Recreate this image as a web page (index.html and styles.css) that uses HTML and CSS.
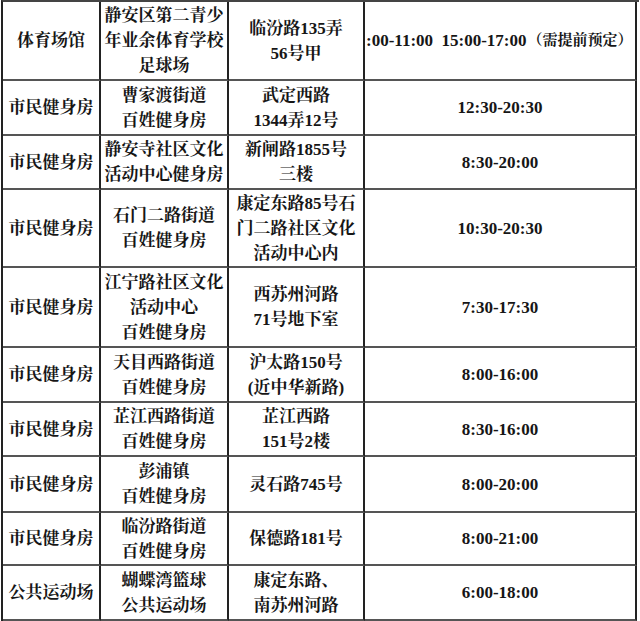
FILE: index.html
```html
<!DOCTYPE html>
<html lang="zh">
<head>
<meta charset="utf-8">
<title>场馆开放时间</title>
<link rel="stylesheet" href="styles.css">
</head>
<body>
<div class="sheet">
  <div class="row r1">
    <div class="cell">体育场馆</div>
    <div class="cell">静安区第二青少<br>年业余体育学校<br>足球场</div>
    <div class="cell">临汾路135弄<br>56号甲</div>
    <div class="cell wide"><span>:00-11:00&nbsp;&nbsp;15:00-17:00</span><span class="note">（需提前预定）</span></div>
  </div>
  <div class="row r2">
    <div class="cell">市民健身房</div>
    <div class="cell">曹家渡街道<br>百姓健身房</div>
    <div class="cell">武定西路<br>1344弄12号</div>
    <div class="cell">12:30-20:30</div>
  </div>
  <div class="row r3">
    <div class="cell">市民健身房</div>
    <div class="cell">静安寺社区文化<br>活动中心健身房</div>
    <div class="cell">新闸路1855号<br>三楼</div>
    <div class="cell">8:30-20:00</div>
  </div>
  <div class="row r4">
    <div class="cell">市民健身房</div>
    <div class="cell">石门二路街道<br>百姓健身房</div>
    <div class="cell">康定东路85号石<br>门二路社区文化<br>活动中心内</div>
    <div class="cell">10:30-20:30</div>
  </div>
  <div class="row r5">
    <div class="cell">市民健身房</div>
    <div class="cell">江宁路社区文化<br>活动中心<br>百姓健身房</div>
    <div class="cell">西苏州河路<br>71号地下室</div>
    <div class="cell">7:30-17:30</div>
  </div>
  <div class="row r6">
    <div class="cell">市民健身房</div>
    <div class="cell">天目西路街道<br>百姓健身房</div>
    <div class="cell">沪太路150号<br>(近中华新路)</div>
    <div class="cell">8:00-16:00</div>
  </div>
  <div class="row r7">
    <div class="cell">市民健身房</div>
    <div class="cell">芷江西路街道<br>百姓健身房</div>
    <div class="cell">芷江西路<br>151号2楼</div>
    <div class="cell">8:30-16:00</div>
  </div>
  <div class="row r8">
    <div class="cell">市民健身房</div>
    <div class="cell">彭浦镇<br>百姓健身房</div>
    <div class="cell">灵石路745号</div>
    <div class="cell">8:00-20:00</div>
  </div>
  <div class="row r9">
    <div class="cell">市民健身房</div>
    <div class="cell">临汾路街道<br>百姓健身房</div>
    <div class="cell">保德路181号</div>
    <div class="cell">8:00-21:00</div>
  </div>
  <div class="row r10">
    <div class="cell">公共运动场</div>
    <div class="cell">蝴蝶湾篮球<br>公共运动场</div>
    <div class="cell">康定东路、<br>南苏州河路</div>
    <div class="cell">6:00-18:00</div>
  </div>
</div>
</body>
</html>
```

FILE: styles.css
```css
html, body {
  margin: 0;
  padding: 0;
  background: #ffffff;
}

body {
  width: 640px;
  height: 621px;
  overflow: hidden;
  font-family: "Liberation Serif", "Noto Serif CJK SC", "Noto Sans CJK SC", serif;
  font-size: 17px;
  font-weight: 700;
  line-height: 25px;
  color: #161616;
}

.sheet {
  margin-left: 1px;
  width: 636px;
  border-left: 2px solid #222;
  border-top: 2px solid #444;
}

.row {
  display: grid;
  grid-template-columns: 98px 128px 136px 272px;
}

.cell {
  display: flex;
  align-items: center;
  justify-content: center;
  text-align: center;
  border-right: 2px solid #222;
  border-bottom: 2px solid #555;
  box-sizing: border-box;
  white-space: nowrap;
}

.cell.wide {
  justify-content: flex-start;
  padding-left: 1px;
}

.note {
  font-size: 15px;
  margin-left: 1px;
}

.r1 { height: 79px; }
.r2 { height: 55px; }
.r3 { height: 54px; }
.r4 { height: 78px; }
.r5 { height: 80px; }
.r6 { height: 55px; }
.r7 { height: 54px; }
.r8 { height: 56px; }
.r9 { height: 53px; }
.r10 { height: 55px; }
```
